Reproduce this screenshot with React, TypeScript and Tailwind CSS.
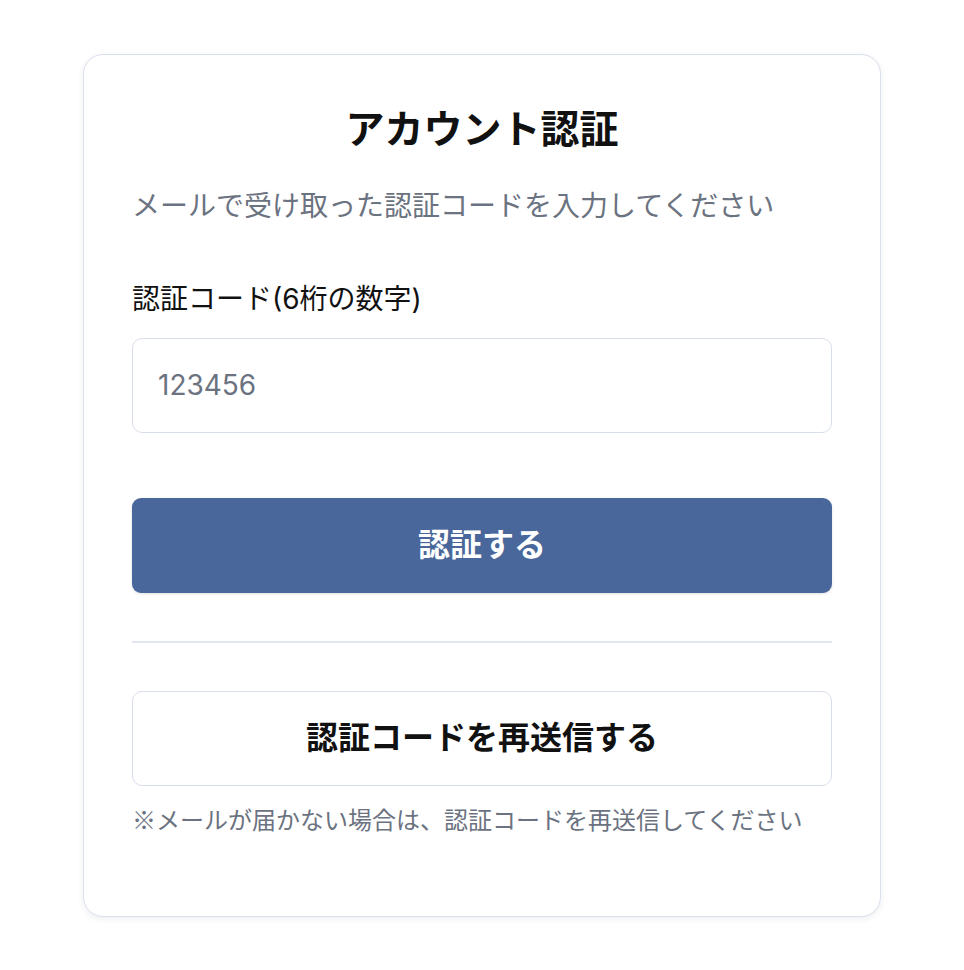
import React, { useState } from 'react';

const font = 'font-["Inter","Noto_Sans_CJK_JP",sans-serif]';

export default function App() {
  const [code, setCode] = useState('');

  return (
    <div className={`min-h-screen flex items-center justify-center bg-white ${font}`}>
      <div className="w-[798px] rounded-[20px] border-[1.5px] border-[#dbe0ee] bg-white px-12 pt-[46px] pb-[77px] shadow-[0_2px_6px_rgba(30,40,80,0.08)]">
        <h1 className="text-center text-[39px] font-bold leading-[56px] text-[#111111]">
          アカウント認証
        </h1>
        <p className="mt-[28px] text-[28px] leading-[42px] text-[#6b7280]">
          メールで受け取った認証コードを入力してください
        </p>

        <label htmlFor="code" className="mt-[51px] block text-[28px] leading-[42px] text-[#111111]">
          認証コード(6桁の数字)
        </label>
        <input
          id="code"
          type="text"
          value={code}
          onChange={(e) => setCode(e.target.value)}
          placeholder="123456"
          className="mt-[18px] block h-[95px] w-full rounded-[10px] border-[1.5px] border-[#d9deec] px-[25px] text-[28px] text-[#111111] placeholder-[#6b7280] focus:outline-none"
        />

        <button className="mt-[65px] flex h-[95px] w-full items-center justify-center rounded-[9px] bg-[#4a679b] text-[32px] font-bold text-white shadow-[0_1px_3px_rgba(0,0,0,0.12)]">
          認証する
        </button>

        <hr className="mt-[48px] border-t-2 border-[#e2e6f0]" />

        <button className="mt-[48px] flex h-[95px] w-full items-center justify-center rounded-[10px] border-[1.5px] border-[#d9deec] bg-white text-[32px] font-bold text-[#111111]">
          認証コードを再送信する
        </button>
        <p className="mt-[15px] text-[24px] leading-[36px] text-[#6b7280]">
          <span className='font-["Noto_Sans_CJK_JP",sans-serif]'>※</span>
          メールが届かない場合は、認証コードを再送信してください
        </p>
      </div>
    </div>
  );
}
